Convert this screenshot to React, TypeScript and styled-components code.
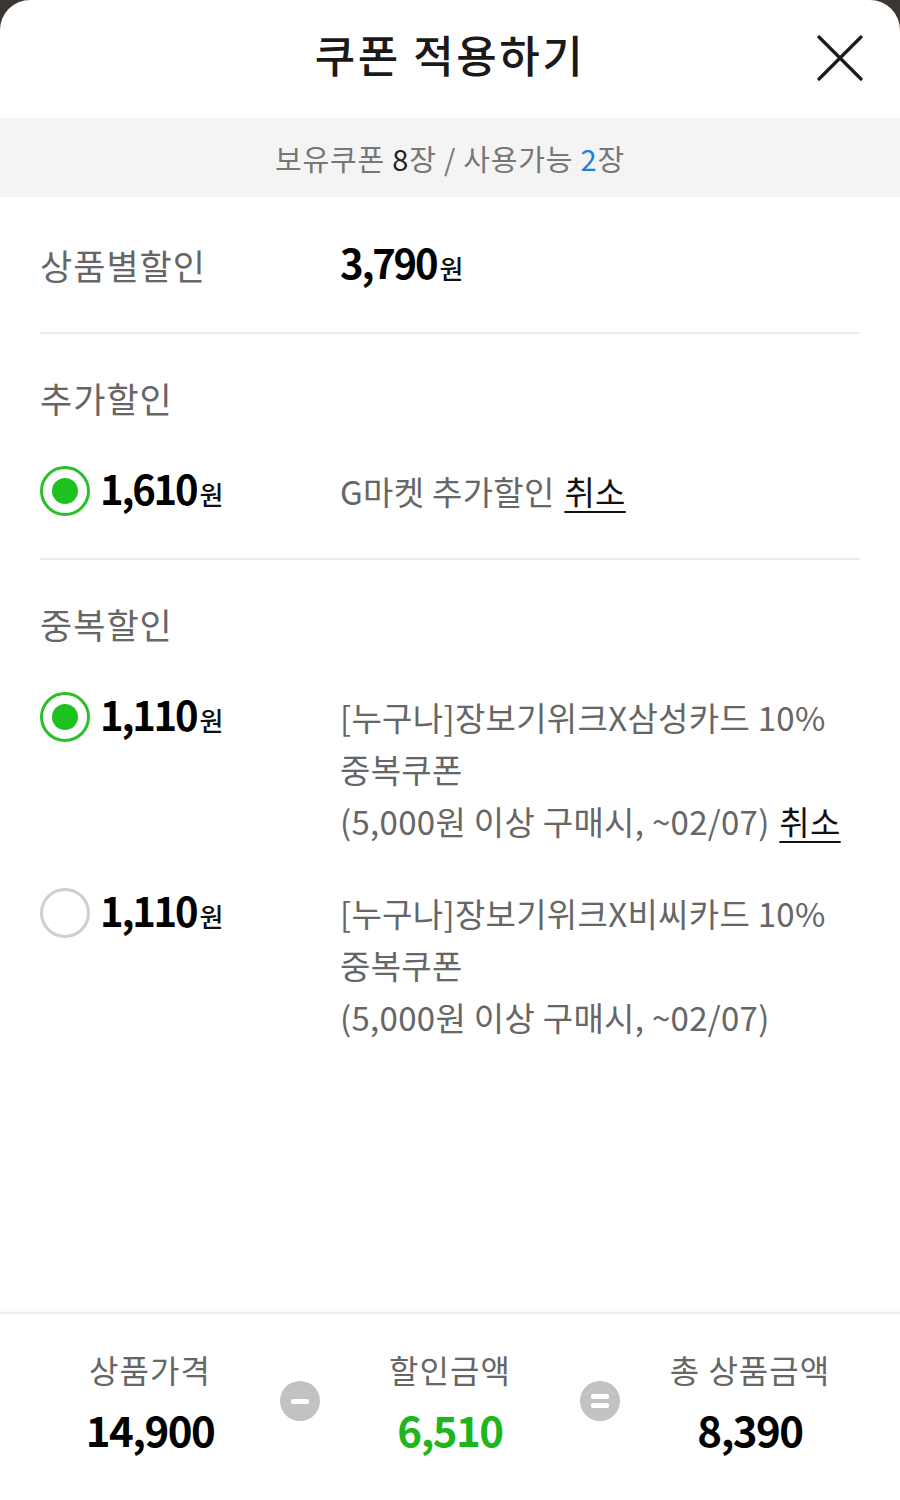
import React from "react";
import styled, { createGlobalStyle } from "styled-components";

const GlobalStyle = createGlobalStyle`
  html, body { margin: 0; padding: 0; }
  body {
    background: #3b3632;
    font-family: "Noto Sans CJK KR", "Noto Sans", sans-serif;
  }
  * { box-sizing: border-box; }
`;

const Sheet = styled.div`
  width: 900px;
  height: 1500px;
  background: #fff;
  border-radius: 30px 30px 0 0;
  display: flex;
  flex-direction: column;
  overflow: hidden;
`;

const Header = styled.header`
  height: 118px;
  position: relative;
  display: flex;
  align-items: center;
  justify-content: center;
`;

const Title = styled.h1`
  margin: 0;
  font-size: 44px;
  font-weight: 500;
  color: #1a1a1a;
  letter-spacing: 2.5px;
  line-height: 1;
  padding-bottom: 10px;
`;

const CloseButton = styled.button`
  position: absolute;
  right: 36px;
  top: 34px;
  width: 48px;
  height: 48px;
  padding: 0;
  border: none;
  background: none;
  display: flex;
  align-items: center;
  justify-content: center;
`;

const InfoBar = styled.div`
  height: 79px;
  background: #f4f4f4;
  display: flex;
  align-items: center;
  justify-content: center;
  font-size: 29px;
  color: #777;
  letter-spacing: 0.8px;
`;

const Count = styled.span<{ $blue?: boolean }>`
  color: ${(p) => (p.$blue ? "#1a7fe0" : "#222")};
`;

const Content = styled.main`
  flex: 1;
  padding: 0 40px;
`;

const Section = styled.section<{ $last?: boolean }>`
  border-bottom: ${(p) => (p.$last ? "none" : "2px solid #ebebeb")};
  padding: 44px 0 41px;
  display: flex;
  flex-direction: column;
  gap: 47px;
`;

const TopRow = styled.div`
  height: 137px;
  display: flex;
  align-items: center;
  border-bottom: 2px solid #ebebeb;
`;

const Label = styled.div`
  font-size: 35px;
  color: #666;
  line-height: 40px;
  letter-spacing: 1px;
`;

const LabelCell = styled(Label)`
  width: 300px;
`;

const Amount = styled.span`
  font-size: 40px;
  font-weight: 700;
  color: #000;
  letter-spacing: -2.2px;
  line-height: 52px;
`;

const Won = styled.span`
  font-size: 26px;
  font-weight: 500;
  color: #111;
  margin-left: 3px;
  letter-spacing: 0;
`;

const OptionList = styled.div`
  display: flex;
  flex-direction: column;
  gap: 40px;
`;

const OptionRow = styled.div`
  display: flex;
  align-items: flex-start;
`;

const OptionLeft = styled.div`
  width: 300px;
  display: flex;
  align-items: center;
  gap: 10px;
  height: 52px;
`;

const Radio = styled.span<{ $checked?: boolean }>`
  width: 50px;
  height: 50px;
  border-radius: 50%;
  border: 3px solid ${(p) => (p.$checked ? "#2cbf2c" : "#cfcfcf")};
  display: flex;
  align-items: center;
  justify-content: center;
  flex-shrink: 0;
  &::after {
    content: "";
    display: ${(p) => (p.$checked ? "block" : "none")};
    width: 26px;
    height: 26px;
    border-radius: 50%;
    background: #1ec21e;
  }
`;

const Desc = styled.div`
  flex: 1;
  font-size: 33px;
  line-height: 52px;
  color: #666;
  letter-spacing: 0.3px;
`;

const Cancel = styled.a`
  color: #111;
  text-decoration: underline;
  text-underline-offset: 6px;
  text-decoration-thickness: 2px;
  font-weight: 400;
  margin-left: 2px;
`;

const Footer = styled.footer`
  height: 188px;
  border-top: 2px solid #ececec;
  box-shadow: 0 -2px 4px rgba(0, 0, 0, 0.03);
  display: flex;
  align-items: center;
  justify-content: center;
  padding-bottom: 16px;
`;

const SumCol = styled.div`
  width: 220px;
  display: flex;
  flex-direction: column;
  align-items: center;
  gap: 8px;
`;

const SumLabel = styled.div`
  font-size: 32px;
  color: #666;
  line-height: 52px;
  letter-spacing: 1px;
`;

const SumValue = styled.div<{ $green?: boolean }>`
  font-size: 42px;
  font-weight: 700;
  line-height: 52px;
  letter-spacing: -1.5px;
  color: ${(p) => (p.$green ? "#1db61d" : "#000")};
`;

const Operator = styled.div`
  width: 80px;
  display: flex;
  justify-content: center;
  padding-top: 4px;
`;

const OpCircle = styled.span`
  width: 40px;
  height: 40px;
  border-radius: 50%;
  background: #c2c2c2;
  display: flex;
  flex-direction: column;
  align-items: center;
  justify-content: center;
  gap: 4px;
`;

const OpBar = styled.span`
  width: 18px;
  height: 5px;
  border-radius: 2px;
  background: #fff;
`;

export default function App() {
  return (
    <>
      <GlobalStyle />
      <Sheet>
        <Header>
          <Title>쿠폰 적용하기</Title>
          <CloseButton aria-label="닫기">
            <svg width="46" height="46" viewBox="0 0 46 46">
              <path d="M2 2 L44 44 M44 2 L2 44" stroke="#1a1a1a" strokeWidth="3.2" strokeLinecap="round" />
            </svg>
          </CloseButton>
        </Header>
        <InfoBar>
          보유쿠폰&nbsp;<Count>8</Count>장 / 사용가능&nbsp;<Count $blue>2</Count>장
        </InfoBar>
        <Content>
          <TopRow>
            <LabelCell>상품별할인</LabelCell>
            <Amount>
              3,790<Won>원</Won>
            </Amount>
          </TopRow>
          <Section>
            <Label>추가할인</Label>
            <OptionRow>
              <OptionLeft>
                <Radio $checked />
                <Amount>
                  1,610<Won>원</Won>
                </Amount>
              </OptionLeft>
              <Desc>
                G마켓 추가할인 <Cancel>취소</Cancel>
              </Desc>
            </OptionRow>
          </Section>
          <Section $last>
            <Label>중복할인</Label>
            <OptionList>
              <OptionRow>
                <OptionLeft>
                  <Radio $checked />
                  <Amount>
                    1,110<Won>원</Won>
                  </Amount>
                </OptionLeft>
                <Desc>
                  [누구나]장보기위크X삼성카드 10%
                  <br />
                  중복쿠폰
                  <br />
                  (5,000원 이상 구매시, ~02/07) <Cancel>취소</Cancel>
                </Desc>
              </OptionRow>
              <OptionRow>
                <OptionLeft>
                  <Radio />
                  <Amount>
                    1,110<Won>원</Won>
                  </Amount>
                </OptionLeft>
                <Desc>
                  [누구나]장보기위크X비씨카드 10%
                  <br />
                  중복쿠폰
                  <br />
                  (5,000원 이상 구매시, ~02/07)
                </Desc>
              </OptionRow>
            </OptionList>
          </Section>
        </Content>
        <Footer>
          <SumCol>
            <SumLabel>상품가격</SumLabel>
            <SumValue>14,900</SumValue>
          </SumCol>
          <Operator>
            <OpCircle>
              <OpBar />
            </OpCircle>
          </Operator>
          <SumCol>
            <SumLabel>할인금액</SumLabel>
            <SumValue $green>6,510</SumValue>
          </SumCol>
          <Operator>
            <OpCircle>
              <OpBar />
              <OpBar />
            </OpCircle>
          </Operator>
          <SumCol>
            <SumLabel>총 상품금액</SumLabel>
            <SumValue>8,390</SumValue>
          </SumCol>
        </Footer>
      </Sheet>
    </>
  );
}
